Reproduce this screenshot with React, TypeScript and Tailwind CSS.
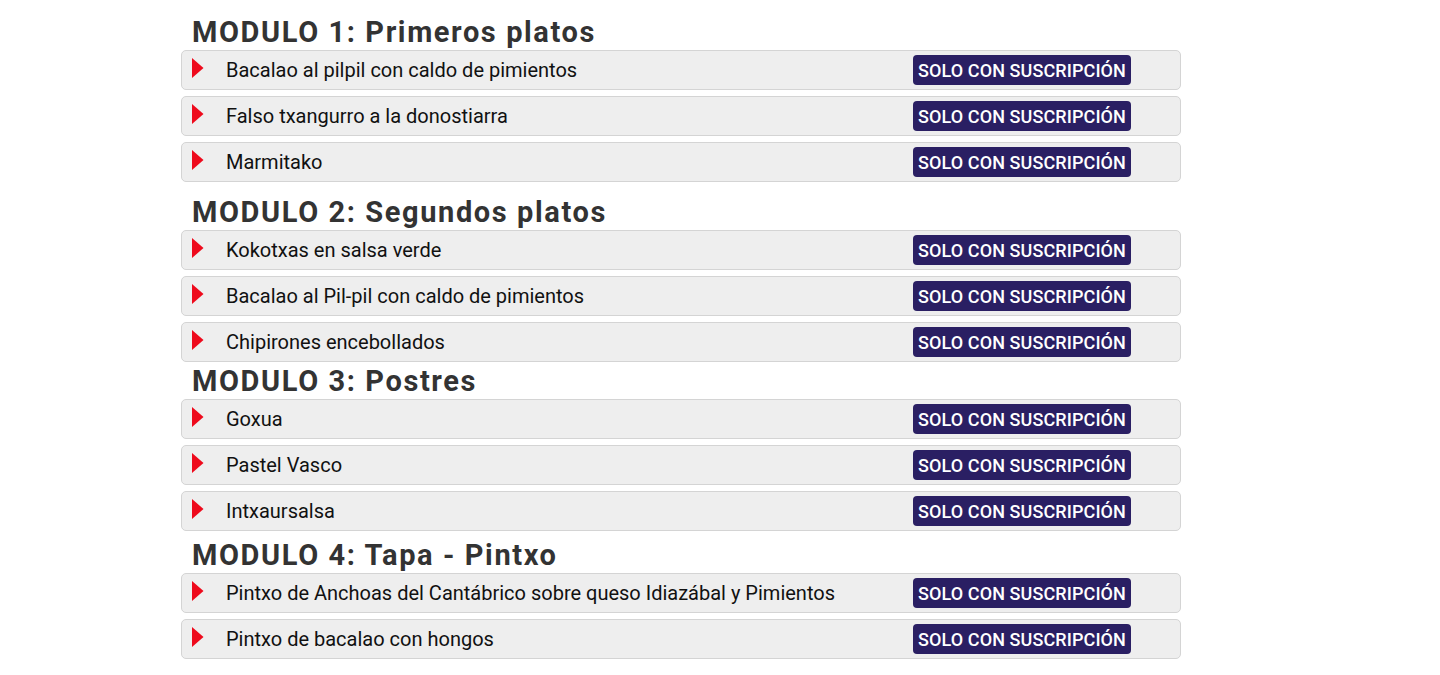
type Module = {
  title: string;
  lessons: string[];
  gap: string;
};

const MODULES: Module[] = [
  {
    title: "MODULO 1: Primeros platos",
    gap: "mt-0",
    lessons: [
      "Bacalao al pilpil con caldo de pimientos",
      "Falso txangurro a la donostiarra",
      "Marmitako",
    ],
  },
  {
    title: "MODULO 2: Segundos platos",
    gap: "mt-[12px]",
    lessons: [
      "Kokotxas en salsa verde",
      "Bacalao al Pil-pil con caldo de pimientos",
      "Chipirones encebollados",
    ],
  },
  {
    title: "MODULO 3: Postres",
    gap: "mt-[1px]",
    lessons: ["Goxua", "Pastel Vasco", "Intxaursalsa"],
  },
  {
    title: "MODULO 4: Tapa - Pintxo",
    gap: "mt-[6px]",
    lessons: [
      "Pintxo de Anchoas del Cantábrico sobre queso Idiazábal y Pimientos",
      "Pintxo de bacalao con hongos",
    ],
  },
];

function Lesson({ name }: { name: string }) {
  return (
    <div className="flex h-10 items-center rounded-[5px] border border-[#d4d4d4] bg-[#eeeeee]">
      {/* red play arrow */}
      <svg width="12" height="20" viewBox="0 0 12 20" className="ml-[10px] -mt-[4px] shrink-0">
        <polygon points="0,0 11.5,10 0,20" fill="#ee0a1c" />
      </svg>
      <span className="ml-[22px] flex-1 text-[20px] text-[#111]">{name}</span>
      <div className="w-[267px] shrink-0">
        <span className="inline-flex h-[30px] items-center rounded-[4px] bg-[#2a1f63] px-[5px] text-[18px] font-medium tracking-[0.1px] text-white">
          SOLO CON SUSCRIPCIÓN
        </span>
      </div>
    </div>
  );
}

export default function App() {
  return (
    <div
      className="min-h-screen bg-white"
      style={{ fontFamily: "Roboto, 'Liberation Sans', sans-serif" }}
    >
      <div className="ml-[181px] w-[1000px] pt-[14px]">
        {MODULES.map((m) => (
          <section key={m.title} className={m.gap}>
            <h2 className="pl-[11px] text-[29px] font-bold leading-[36px] tracking-[1.6px] text-[#333333]">
              {m.title}
            </h2>
            <div className="flex flex-col gap-[6px]">
              {m.lessons.map((l) => (
                <Lesson key={l} name={l} />
              ))}
            </div>
          </section>
        ))}
      </div>
    </div>
  );
}
